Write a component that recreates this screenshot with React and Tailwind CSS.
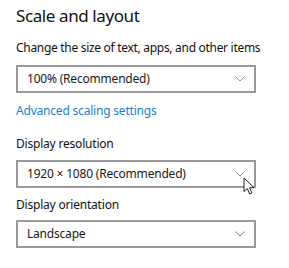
import React from 'react';

function Chevron() {
  return (
    <svg width="10" height="6" viewBox="0 0 10 6" fill="none" className="shrink-0">
      <path d="M0.5 0.5L5 5L9.5 0.5" stroke="#8a8a8a" strokeWidth="1" />
    </svg>
  );
}

function Select({ value, children }) {
  return (
    <div className="relative flex h-[28px] w-[240px] items-center justify-between border-2 border-[#999999] bg-white pl-[9px] pr-[9px]">
      <span className="text-[12px] tracking-[-0.2px] text-[#1a1a1a]">{value}</span>
      <Chevron />
      {children}
    </div>
  );
}

function Cursor() {
  return (
    <svg
      width="13"
      height="19"
      viewBox="0 0 13 19"
      className="absolute left-[225px] top-[15px]"
    >
      <path
        d="M1 1L1 14.5L4.3 11.5L6.6 17L8.8 16L6.6 10.7L11 10.7Z"
        fill="white"
        stroke="#222"
        strokeWidth="1"
        strokeLinejoin="round"
      />
    </svg>
  );
}

export default function App() {
  return (
    <div className="h-[268px] w-[289px] bg-white pl-4 pt-[4px] font-['Noto_Sans',sans-serif] text-[#111]">
      <h2 className="text-[17px] font-normal leading-[24px] tracking-[-0.4px]">Scale and layout</h2>
      <p className="mt-[12px] text-[12px] leading-[16px] tracking-[-0.3px]">Change the size of text, apps, and other items</p>
      <div className="mt-[9px]">
        <Select value="100% (Recommended)" />
      </div>
      <p className="mt-[10px] text-[12px] leading-[16px] tracking-[-0.2px] text-[#1a7fd4]">Advanced scaling settings</p>
      <p className="mt-[17px] text-[12px] leading-[16px] tracking-[-0.2px]">Display resolution</p>
      <div className="mt-[8px]">
        <Select value="1920 × 1080 (Recommended)">
          <Cursor />
        </Select>
      </div>
      <p className="mt-[9px] text-[12px] leading-[16px] tracking-[-0.2px]">Display orientation</p>
      <div className="mt-[7px]">
        <Select value="Landscape" />
      </div>
    </div>
  );
}
